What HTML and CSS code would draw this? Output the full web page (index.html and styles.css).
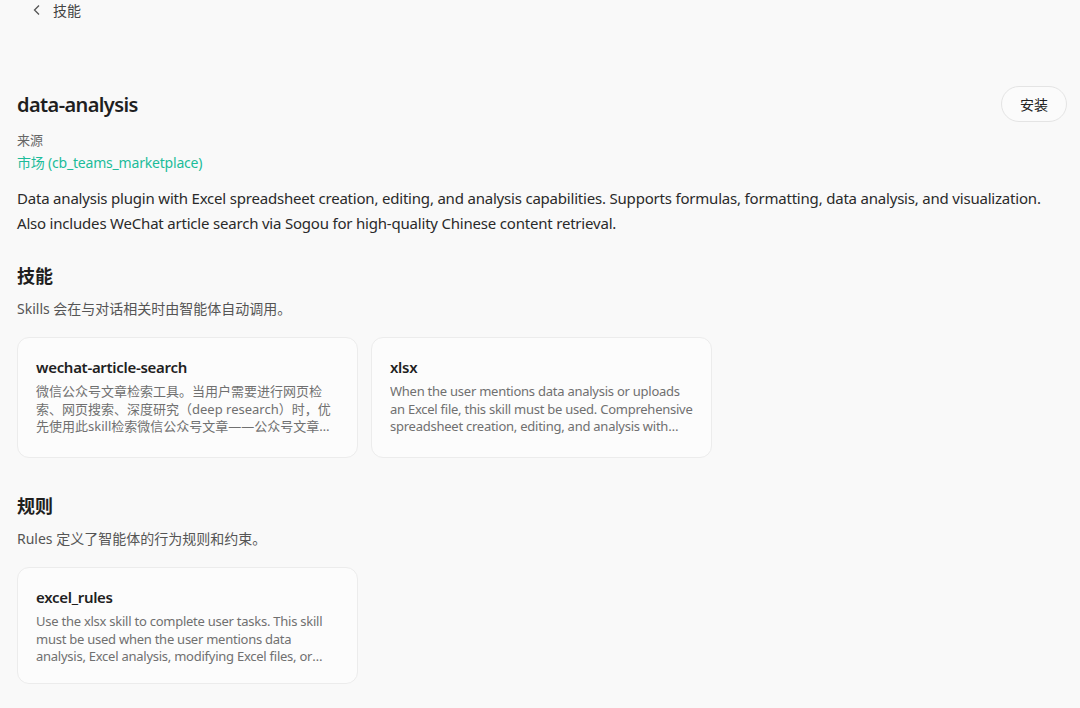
FILE: index.html
```html
<!DOCTYPE html>
<html lang="zh-CN">
<head>
    <meta charset="UTF-8">
    <meta name="viewport" content="width=device-width, initial-scale=1.0">
    <title>data-analysis</title>
    <link rel="stylesheet" href="styles.css">
</head>
<body>
    <div class="topbar">
        <span class="back">
            <svg width="10" height="12" viewBox="0 0 10 12"><path d="M7 1.5 L2.5 6 L7 10.5" fill="none" stroke="#555" stroke-width="1.3"/></svg>
        </span>
        <span class="crumb">技能</span>
    </div>

    <div class="page">
        <div class="header">
            <h1>data-analysis</h1>
            <button class="install">安装</button>
        </div>

        <div class="source-label">来源</div>
        <div class="source">市场 (cb_teams_marketplace)</div>

        <p class="desc">Data analysis plugin with Excel spreadsheet creation, editing, and analysis capabilities. Supports formulas, formatting, data analysis, and visualization. Also includes WeChat article search via Sogou for high-quality Chinese content retrieval.</p>

        <h2>技能</h2>
        <p class="hint">Skills 会在与对话相关时由智能体自动调用。</p>
        <div class="cards skills">
            <div class="card">
                <h3>wechat-article-search</h3>
                <p class="zh">微信公众号文章检索工具。当用户需要进行网页检索、网页搜索、深度研究（deep research）时，优先使用此skill检索微信公众号文章——公众号文章是高质量中文内容的重要来源。</p>
            </div>
            <div class="card">
                <h3>xlsx</h3>
                <p>When the user mentions data analysis or uploads an Excel file, this skill must be used. Comprehensive spreadsheet creation, editing, and analysis with support for formulas, formatting and visualization.</p>
            </div>
        </div>

        <h2 class="rules-title">规则</h2>
        <p class="hint">Rules 定义了智能体的行为规则和约束。</p>
        <div class="cards">
            <div class="card">
                <h3>excel_rules</h3>
                <p>Use the xlsx skill to complete user tasks. This skill must be used when the user mentions data analysis, Excel analysis, modifying Excel files, or uploads spreadsheets.</p>
            </div>
        </div>
    </div>
</body>
</html>
```

FILE: styles.css
```css
body {
    font-family: "Noto Sans", "Noto Sans CJK SC", sans-serif;
    background-color: #f9f9f9;
    color: #1f1f1f;
    margin: 0;
}
.topbar {
    display: flex;
    align-items: center;
    height: 20px;
    padding-left: 32px;
    font-size: 14px;
    color: #444;
}
.back {
    display: flex;
    width: 21px;
}
.page {
    padding: 0 17px;
}
.header {
    display: flex;
    justify-content: space-between;
    align-items: center;
    margin-top: 66px;
}
h1 {
    font-size: 20px;
    font-weight: 600;
    letter-spacing: -0.6px;
    margin: 0;
}
.install {
    font-family: inherit;
    font-size: 14px;
    color: #222;
    background: #fbfbfb;
    border: 1px solid #e4e4e4;
    border-radius: 18px;
    width: 66px;
    height: 36px;
    margin-right: -4px;
}
.source-label {
    font-size: 13px;
    color: #666;
    margin-top: 8px;
    line-height: 20px;
}
.source {
    font-size: 14px;
    color: #1cbc9a;
    line-height: 22px;
    margin-top: 2px;
    letter-spacing: -0.2px;
}
.desc {
    font-size: 15px;
    line-height: 25px;
    color: #2a2a2a;
    letter-spacing: -0.2px;
    margin: 12px 0 0;
}
h2 {
    font-size: 18px;
    font-weight: 700;
    margin: 27px 0 0;
    line-height: 26px;
}
.rules-title {
    margin-top: 35px;
}
.hint {
    font-size: 14px;
    color: #555;
    margin: 10px 0 0;
    line-height: 20px;
}
.cards {
    display: flex;
    gap: 13px;
    margin-top: 18px;
}
.card {
    width: 341px;
    box-sizing: border-box;
    background: #fcfcfc;
    border: 1px solid #ececec;
    border-radius: 12px;
    padding: 18px 17px 17px 18px;
}
.skills .card {
    min-height: 121px;
}
.card h3 {
    font-size: 15px;
    font-weight: 600;
    letter-spacing: -0.3px;
    margin: 0;
    line-height: 22px;
}
.card p {
    font-size: 13px;
    line-height: 17.5px;
    color: #707070;
    letter-spacing: -0.25px;
    margin: 5px 0 0;
    display: -webkit-box;
    -webkit-line-clamp: 3;
    -webkit-box-orient: vertical;
    overflow: hidden;
}
.card p.zh {
    letter-spacing: 0;
}
```
